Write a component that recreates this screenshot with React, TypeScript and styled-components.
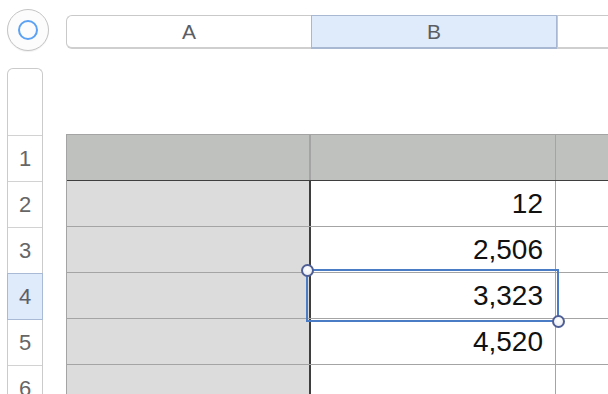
import React from "react";
import styled, { createGlobalStyle } from "styled-components";

const GlobalStyle = createGlobalStyle`
  html, body {
    margin: 0;
    padding: 0;
    background: #fff;
    overflow: hidden;
  }
  body {
    font-family: "Liberation Sans", Arial, sans-serif;
  }
`;

const Page = styled.div`
  width: 608px;
  height: 394px;
  display: flex;
  align-items: flex-start;
  overflow: hidden;
`;

const LeftRail = styled.div`
  width: 66px;
  flex: 0 0 66px;
  padding-left: 7px;
  box-sizing: border-box;
  display: flex;
  flex-direction: column;
  & > * {
    flex-shrink: 0;
  }
`;

const MainArea = styled.div`
  flex: 1 1 auto;
  display: flex;
  flex-direction: column;
  min-width: 0;
  & > * {
    flex-shrink: 0;
  }
`;

const CornerButton = styled.div`
  margin-top: 9px;
  width: 42px;
  height: 42px;
  box-sizing: border-box;
  border-radius: 50%;
  border: 1px solid #c4c4c4;
  background: #fcfcfc;
  box-shadow: 0 1px 1px rgba(0, 0, 0, 0.06);
  display: flex;
  align-items: center;
  justify-content: center;
`;

const CornerRing = styled.div`
  width: 20px;
  height: 20px;
  box-sizing: border-box;
  border-radius: 50%;
  border: 2px solid #5ba2f4;
`;

const RowHeaderStrip = styled.div`
  margin-top: 17px;
  width: 36px;
  box-sizing: border-box;
  border: 1px solid #cbcbcb;
  border-bottom: none;
  border-radius: 6px 6px 0 0;
  background: #fff;
  display: flex;
  flex-direction: column;
  & > * {
    flex-shrink: 0;
  }
`;

const RowHeaderBlank = styled.div`
  height: 66px;
  border-bottom: 1px solid #d2d2d2;
`;

const RowHeaderCell = styled.div<{ $active?: boolean }>`
  height: 46px;
  box-sizing: border-box;
  display: flex;
  align-items: center;
  justify-content: center;
  font-size: 22px;
  color: ${(p) => (p.$active ? "#5c5f66" : "#666")};
  background: ${(p) => (p.$active ? "#dfeafb" : "#fff")};
  border-bottom: 1px solid ${(p) => (p.$active ? "#a9bad6" : "#d2d2d2")};
  ${(p) =>
    p.$active
      ? "margin: -1px -1px 0; height: 47px; border-top: 1px solid #a9bad6; border-left: 1px solid #a9bad6; border-right: 1px solid #a9bad6;"
      : ""}
`;

const ColumnHeaderBar = styled.div`
  margin-top: 15px;
  height: 34px;
  box-sizing: border-box;
  display: flex;
  border: 1px solid #c9c9c9;
  border-right: none;
  border-bottom: 2px solid #cfcfcf;
  border-radius: 6px 0 0 6px;
  background: #fff;
`;

const ColumnHeaderCell = styled.div<{ $w?: number; $active?: boolean }>`
  ${(p) => (p.$w ? `width: ${p.$w}px; flex: 0 0 ${p.$w}px;` : "flex: 1 1 auto;")}
  box-sizing: border-box;
  display: flex;
  align-items: center;
  justify-content: center;
  font-size: 21px;
  color: #5a5d63;
  background: ${(p) => (p.$active ? "#dfeafb" : "transparent")};
  border-left: 1px solid ${(p) => (p.$active ? "#a9b8d2" : "#c9c9c9")};
  ${(p) =>
    p.$active
      ? "margin: -1px 0 -2px; border-top: 1px solid #a9b8d2; border-bottom: 2px solid #a9b8d2; border-right: 1px solid #a9b8d2;"
      : ""}
  &:first-child {
    border-left: none;
  }
`;

const TableWrap = styled.div`
  position: relative;
  margin-top: 85px;
`;

const Table = styled.div`
  border-top: 1px solid #a4a4a4;
  border-left: 1px solid #a4a4a4;
  display: flex;
  flex-direction: column;
  & > * {
    flex-shrink: 0;
  }
`;

const Row = styled.div<{ $header?: boolean }>`
  display: flex;
  height: 46px;
  box-sizing: border-box;
  border-bottom: 1px solid ${(p) => (p.$header ? "#3e3e3e" : "#a4a4a4")};
  background: ${(p) => (p.$header ? "#bfc1bf" : "#fff")};
`;

const Cell = styled.div<{ $kind: "a" | "b" | "c"; $header?: boolean }>`
  box-sizing: border-box;
  display: flex;
  align-items: center;
  justify-content: flex-end;
  padding-right: 12px;
  font-size: 28px;
  color: #111;
  ${(p) =>
    p.$kind === "a"
      ? `width: 244px; flex: 0 0 244px; border-right: 2px solid ${
          p.$header ? "#a4a4a4" : "#3e3e3e"
        }; background: ${p.$header ? "#bfc1bf" : "#dcdcdc"};`
      : p.$kind === "b"
      ? "width: 245px; flex: 0 0 245px; border-right: 1px solid #a4a4a4;"
      : "flex: 1 1 auto;"}
`;

const Selection = styled.div`
  position: absolute;
  left: 240px;
  top: 135px;
  width: 253px;
  height: 53px;
  box-sizing: border-box;
  border: 2px solid #4a7cc6;
  pointer-events: none;
`;

const Handle = styled.div<{ $corner: "tl" | "br" }>`
  position: absolute;
  width: 13px;
  height: 13px;
  box-sizing: border-box;
  border-radius: 50%;
  border: 2px solid #4f5f95;
  background: radial-gradient(circle at 50% 35%, #ffffff 0%, #eef0f5 70%, #dde1ea 100%);
  ${(p) => (p.$corner === "tl" ? "left: -7px; top: -7px;" : "right: -8px; bottom: -8px;")}
`;

const values = ["", "12", "2,506", "3,323", "4,520", ""];

export default function App() {
  return (
    <>
      <GlobalStyle />
      <Page>
        <LeftRail>
          <CornerButton>
            <CornerRing />
          </CornerButton>
          <RowHeaderStrip>
            <RowHeaderBlank />
            {values.map((_, i) => (
              <RowHeaderCell key={i} $active={i === 3}>
                {i + 1}
              </RowHeaderCell>
            ))}
          </RowHeaderStrip>
        </LeftRail>
        <MainArea>
          <ColumnHeaderBar>
            <ColumnHeaderCell $w={244}>A</ColumnHeaderCell>
            <ColumnHeaderCell $w={246} $active>
              B
            </ColumnHeaderCell>
            <ColumnHeaderCell />
          </ColumnHeaderBar>
          <TableWrap>
            <Table>
              {values.map((v, i) => (
                <Row key={i} $header={i === 0}>
                  <Cell $kind="a" $header={i === 0} />
                  <Cell $kind="b">{v}</Cell>
                  <Cell $kind="c" />
                </Row>
              ))}
            </Table>
            <Selection>
              <Handle $corner="tl" />
              <Handle $corner="br" />
            </Selection>
          </TableWrap>
        </MainArea>
      </Page>
    </>
  );
}
